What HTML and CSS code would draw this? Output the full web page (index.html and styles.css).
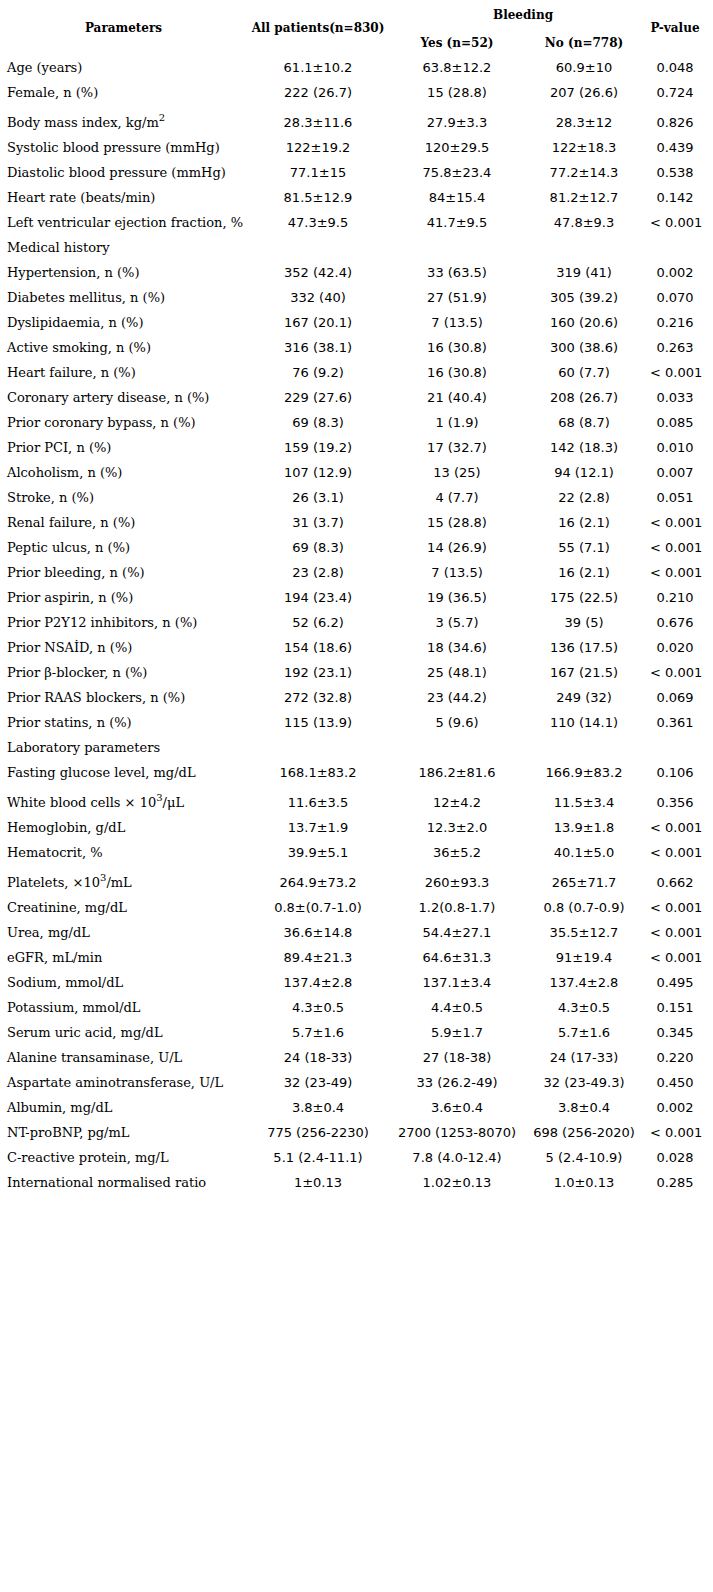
FILE: index.html
```html
<!DOCTYPE html>
<html>
<head>
<meta charset="utf-8">
<link rel="stylesheet" href="styles.css">
</head>
<body>
<table class="tbl">
<colgroup>
<col class="c1"><col class="c2"><col class="c3"><col class="c4"><col class="c5">
</colgroup>
<thead>
<tr class="h1">
<th rowspan="2">Parameters</th>
<th rowspan="2">All patients(n=830)</th>
<th colspan="2">Bleeding</th>
<th rowspan="2">P-value</th>
</tr>
<tr class="h2">
<th>Yes (n=52)</th>
<th>No (n=778)</th>
</tr>
</thead>
<tbody>
<tr><td>Age (years)</td><td>61.1±10.2</td><td>63.8±12.2</td><td>60.9±10</td><td>0.048</td></tr>
<tr><td>Female, n (%)</td><td>222 (26.7)</td><td>15 (28.8)</td><td>207 (26.6)</td><td>0.724</td></tr>
<tr class="sup"><td>Body mass index, kg/m<sup>2</sup></td><td>28.3±11.6</td><td>27.9±3.3</td><td>28.3±12</td><td>0.826</td></tr>
<tr><td>Systolic blood pressure (mmHg)</td><td>122±19.2</td><td>120±29.5</td><td>122±18.3</td><td>0.439</td></tr>
<tr><td>Diastolic blood pressure (mmHg)</td><td>77.1±15</td><td>75.8±23.4</td><td>77.2±14.3</td><td>0.538</td></tr>
<tr><td>Heart rate (beats/min)</td><td>81.5±12.9</td><td>84±15.4</td><td>81.2±12.7</td><td>0.142</td></tr>
<tr><td>Left ventricular ejection fraction, %</td><td>47.3±9.5</td><td>41.7±9.5</td><td>47.8±9.3</td><td>&lt; 0.001</td></tr>
<tr><td>Medical history</td><td></td><td></td><td></td><td></td></tr>
<tr><td>Hypertension, n (%)</td><td>352 (42.4)</td><td>33 (63.5)</td><td>319 (41)</td><td>0.002</td></tr>
<tr><td>Diabetes mellitus, n (%)</td><td>332 (40)</td><td>27 (51.9)</td><td>305 (39.2)</td><td>0.070</td></tr>
<tr><td>Dyslipidaemia, n (%)</td><td>167 (20.1)</td><td>7 (13.5)</td><td>160 (20.6)</td><td>0.216</td></tr>
<tr><td>Active smoking, n (%)</td><td>316 (38.1)</td><td>16 (30.8)</td><td>300 (38.6)</td><td>0.263</td></tr>
<tr><td>Heart failure, n (%)</td><td>76 (9.2)</td><td>16 (30.8)</td><td>60 (7.7)</td><td>&lt; 0.001</td></tr>
<tr><td>Coronary artery disease, n (%)</td><td>229 (27.6)</td><td>21 (40.4)</td><td>208 (26.7)</td><td>0.033</td></tr>
<tr><td>Prior coronary bypass, n (%)</td><td>69 (8.3)</td><td>1 (1.9)</td><td>68 (8.7)</td><td>0.085</td></tr>
<tr><td>Prior PCI, n (%)</td><td>159 (19.2)</td><td>17 (32.7)</td><td>142 (18.3)</td><td>0.010</td></tr>
<tr><td>Alcoholism, n (%)</td><td>107 (12.9)</td><td>13 (25)</td><td>94 (12.1)</td><td>0.007</td></tr>
<tr><td>Stroke, n (%)</td><td>26 (3.1)</td><td>4 (7.7)</td><td>22 (2.8)</td><td>0.051</td></tr>
<tr><td>Renal failure, n (%)</td><td>31 (3.7)</td><td>15 (28.8)</td><td>16 (2.1)</td><td>&lt; 0.001</td></tr>
<tr><td>Peptic ulcus, n (%)</td><td>69 (8.3)</td><td>14 (26.9)</td><td>55 (7.1)</td><td>&lt; 0.001</td></tr>
<tr><td>Prior bleeding, n (%)</td><td>23 (2.8)</td><td>7 (13.5)</td><td>16 (2.1)</td><td>&lt; 0.001</td></tr>
<tr><td>Prior aspirin, n (%)</td><td>194 (23.4)</td><td>19 (36.5)</td><td>175 (22.5)</td><td>0.210</td></tr>
<tr><td>Prior P2Y12 inhibitors, n (%)</td><td>52 (6.2)</td><td>3 (5.7)</td><td>39 (5)</td><td>0.676</td></tr>
<tr><td>Prior NSAİD, n (%)</td><td>154 (18.6)</td><td>18 (34.6)</td><td>136 (17.5)</td><td>0.020</td></tr>
<tr><td>Prior β-blocker, n (%)</td><td>192 (23.1)</td><td>25 (48.1)</td><td>167 (21.5)</td><td>&lt; 0.001</td></tr>
<tr><td>Prior RAAS blockers, n (%)</td><td>272 (32.8)</td><td>23 (44.2)</td><td>249 (32)</td><td>0.069</td></tr>
<tr><td>Prior statins, n (%)</td><td>115 (13.9)</td><td>5 (9.6)</td><td>110 (14.1)</td><td>0.361</td></tr>
<tr><td>Laboratory parameters</td><td></td><td></td><td></td><td></td></tr>
<tr><td>Fasting glucose level, mg/dL</td><td>168.1±83.2</td><td>186.2±81.6</td><td>166.9±83.2</td><td>0.106</td></tr>
<tr class="sup"><td>White blood cells × 10<sup>3</sup>/μL</td><td>11.6±3.5</td><td>12±4.2</td><td>11.5±3.4</td><td>0.356</td></tr>
<tr><td>Hemoglobin, g/dL</td><td>13.7±1.9</td><td>12.3±2.0</td><td>13.9±1.8</td><td>&lt; 0.001</td></tr>
<tr><td>Hematocrit, %</td><td>39.9±5.1</td><td>36±5.2</td><td>40.1±5.0</td><td>&lt; 0.001</td></tr>
<tr class="sup"><td>Platelets, ×10<sup>3</sup>/mL</td><td>264.9±73.2</td><td>260±93.3</td><td>265±71.7</td><td>0.662</td></tr>
<tr><td>Creatinine, mg/dL</td><td>0.8±(0.7-1.0)</td><td>1.2(0.8-1.7)</td><td>0.8 (0.7-0.9)</td><td>&lt; 0.001</td></tr>
<tr><td>Urea, mg/dL</td><td>36.6±14.8</td><td>54.4±27.1</td><td>35.5±12.7</td><td>&lt; 0.001</td></tr>
<tr><td>eGFR, mL/min</td><td>89.4±21.3</td><td>64.6±31.3</td><td>91±19.4</td><td>&lt; 0.001</td></tr>
<tr><td>Sodium, mmol/dL</td><td>137.4±2.8</td><td>137.1±3.4</td><td>137.4±2.8</td><td>0.495</td></tr>
<tr><td>Potassium, mmol/dL</td><td>4.3±0.5</td><td>4.4±0.5</td><td>4.3±0.5</td><td>0.151</td></tr>
<tr><td>Serum uric acid, mg/dL</td><td>5.7±1.6</td><td>5.9±1.7</td><td>5.7±1.6</td><td>0.345</td></tr>
<tr><td>Alanine transaminase, U/L</td><td>24 (18-33)</td><td>27 (18-38)</td><td>24 (17-33)</td><td>0.220</td></tr>
<tr><td>Aspartate aminotransferase, U/L</td><td>32 (23-49)</td><td>33 (26.2-49)</td><td>32 (23-49.3)</td><td>0.450</td></tr>
<tr><td>Albumin, mg/dL</td><td>3.8±0.4</td><td>3.6±0.4</td><td>3.8±0.4</td><td>0.002</td></tr>
<tr><td>NT-proBNP, pg/mL</td><td>775 (256-2230)</td><td>2700 (1253-8070)</td><td>698 (256-2020)</td><td>&lt; 0.001</td></tr>
<tr><td>C-reactive protein, mg/L</td><td>5.1 (2.4-11.1)</td><td>7.8 (4.0-12.4)</td><td>5 (2.4-10.9)</td><td>0.028</td></tr>
<tr><td>International normalised ratio</td><td>1±0.13</td><td>1.02±0.13</td><td>1.0±0.13</td><td>0.285</td></tr>
</tbody>
</table>
</body>
</html>
```
FILE: styles.css
```css
html, body {
  margin: 0;
  padding: 0;
  background: #ffffff;
}
body {
  padding: 0 0 0 7px;
  color: #000000;
  font-family: "DejaVu Serif", serif;
  font-size: 13px;
}
.tbl {
  border-collapse: collapse;
  border-spacing: 0;
  table-layout: fixed;
  width: 693px;
}
.c1 { width: 233px; }
.c2 { width: 156px; }
.c3 { width: 122px; }
.c4 { width: 132px; }
.c5 { width: 50px; }
.tbl th {
  font-family: "DejaVu Serif", serif;
  font-weight: bold;
  font-size: 12px;
  text-align: center;
  vertical-align: middle;
  padding: 0;
  white-space: nowrap;
}
.h1 th { height: 30px; }
.h2 th { height: 25px; }
.tbl td {
  padding: 0;
  height: 25px;
  line-height: 25px;
  vertical-align: bottom;
  text-align: center;
  white-space: nowrap;
  font-family: "DejaVu Sans", sans-serif;
  font-size: 13px;
}
.tbl td:first-child {
  text-align: left;
  font-family: "DejaVu Serif", serif;
}
.tbl tr.sup td {
  height: 30px;
  padding-top: 5px;
  box-sizing: border-box;
}
.tbl sup {
  line-height: 0;
  font-size: 10px;
  vertical-align: 6px;
}
```
